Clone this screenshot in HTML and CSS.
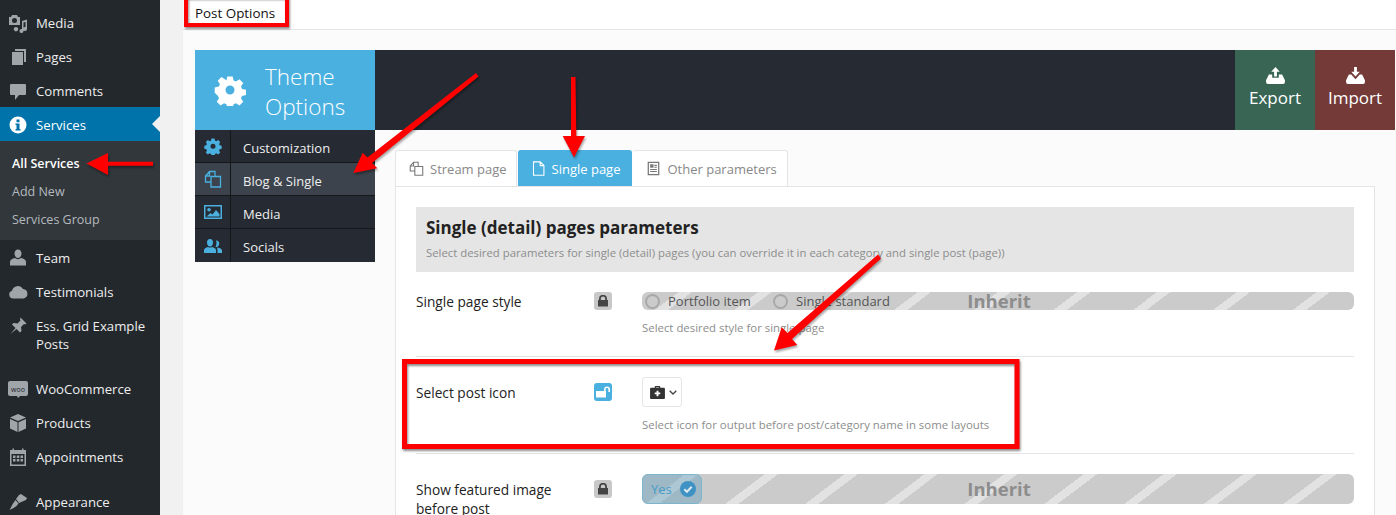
FILE: index.html
```html
<!DOCTYPE html>
<html lang="en">
<head>
  <meta charset="UTF-8">
  <title>Post Options</title>
  <link rel="stylesheet" href="styles.css">
</head>
<body>
  <aside class="sidebar">
    <ul class="wp-menu">
      <li class="wp-item"><svg class="wp-icon" viewBox="0 0 20 20"><path d="M1 4h2l1-2h5l1 2h2v8H1zM6.500 5a2.500 2.500 0 1 0 0 5a2.500 2.500 0 0 0 0-5zM14 8l5-1.500v9.500a2 2 0 1 1-1.500-2V9l-2 .6V18a2 2 0 1 1-1.500-2zM8 14a2.200 2.200 0 1 1-.01 0z"/></svg>Media</li>
      <li class="wp-item"><svg class="wp-icon" viewBox="0 0 20 20"><path d="M7 2h11v13h-2V4H7zM4 5h11v13H4z" fill-rule="evenodd"/></svg>Pages</li>
      <li class="wp-item"><svg class="wp-icon" viewBox="0 0 20 20"><path d="M3 3h14a1 1 0 0 1 1 1v9a1 1 0 0 1-1 1h-6l-4 5v-5H3a1 1 0 0 1-1-1V4a1 1 0 0 1 1-1z"/></svg>Comments</li>
      <li class="wp-item wp-current"><svg class="wp-icon" viewBox="0 0 20 20"><path fill-rule="evenodd" d="M10 1.500a8.500 8.500 0 1 1 0 17a8.500 8.500 0 0 1 0-17zM8.500 4.500v2.700h3V4.500zM7.500 8.600v1.500h1v4h-1v1.500h5v-1.500h-1V8.600z"/></svg>Services</li>
      <li class="wp-sub">
        <a class="wp-sub-link wp-sub-on">All Services</a>
        <a class="wp-sub-link">Add New</a>
        <a class="wp-sub-link">Services Group</a>
      </li>
      <li class="wp-item"><svg class="wp-icon" viewBox="0 0 20 20"><path d="M10 1.500c2.200 0 3.500 1.800 3.500 4s-1.300 4.500-3.500 4.500s-3.500-2.300-3.500-4.500s1.300-4 3.500-4zM7 10c1.500 1.500 4.500 1.500 6 0c3 .5 5 2 5 4v3.500H2V14c0-2 2-3.500 5-4z"/></svg>Team</li>
      <li class="wp-item"><svg class="wp-icon" viewBox="0 0 20 20"><path d="M5 16a4 4 0 0 1-1-7.800A6 6 0 0 1 15 6.500a4.800 4.800 0 0 1 .5 9.500z" transform="translate(0 .5)"/></svg>Testimonials</li>
      <li class="wp-item"><svg class="wp-icon" viewBox="0 0 20 20"><path d="M12.500 1.500l6 6l-1.500 1l-1-.5l-3 3l.5 4l-1.500 1.500l-3.500-3.500l-6 5l5-6l-3.500-3.500l1.500-1.500l4 .5l3-3l-.5-1z"/></svg>Ess. Grid Example Posts</li>
      <li class="wp-item wp-gap"><svg class="wp-icon" viewBox="0 0 20 20"><rect x="0" y="2" width="20" height="15" rx="2"/><path d="M9 17h3l-2 2z"/><text class="woo-text" x="10" y="12.500">woo</text></svg>WooCommerce</li>
      <li class="wp-item"><svg class="wp-icon" viewBox="0 0 20 20"><path d="M10 1l8 3.500l-8 3.500l-8-3.500zM2 6l7.500 3.300V19L2 15.500zM18 6v9.500L10.500 19V9.300z"/></svg>Products</li>
      <li class="wp-item"><svg class="wp-icon" viewBox="0 0 20 20"><path fill-rule="evenodd" d="M2 3h2.500V1.500h1.500V3h8V1.500h1.500V3H18v16H2zM3.500 7v10.500h13V7zM5 8.500h2.500V11H5zM8.800 8.500h2.500V11H8.800zM12.500 8.500H15V11h-2.500zM5 12h2.500v2.500H5zM8.800 12h2.500v2.500H8.800zM12.500 12H15v2.500h-2.500z"/></svg>Appointments</li>
      <li class="wp-item wp-gap"><svg class="wp-icon" viewBox="0 0 20 20"><path d="M13 2l6 4l-1 2l-7 3l-3-4l3-4zM7.500 8l3 3.500l-2 2.500c-1.500 1.500-5 3-7 4c1-2 2.500-4.500 3.500-6.500z"/></svg>Appearance</li>
    </ul>
  </aside>

  <main class="main">
    <div class="page-title">Post Options</div>
    <div class="options">
      <header class="opt-head">
        <div class="opt-logo">
          <svg class="opt-gear" viewBox="0 0 32 32"><path fill-rule="evenodd" d="M13 1h6l1 4.500l2.600 1.100l3.900-2.500l4.200 4.200l-2.500 3.900l1.100 2.600l4.700 1v5.800l-4.700 1l-1.100 2.600l2.500 3.900l-4.200 4.200l-3.900-2.500l-2.600 1.100l-1 4.500h-6l-1-4.500l-2.600-1.100l-3.900 2.500l-4.200-4.200l2.500-3.900l-1.100-2.600L-1 19v-5.800l4.700-1l1.100-2.600l-2.500-3.900l4.200-4.200l3.900 2.500L12 5.500zM16 11a5 5 0 1 0 0 10a5 5 0 0 0 0-10z" transform="translate(1.600 1.600) scale(.9)"/></svg>
          <span class="opt-title">Theme Options</span>
        </div>
        <div class="opt-actions">
          <a class="opt-btn opt-export"><svg class="opt-btn-icon" viewBox="0 0 20 18"><path d="M10 0l4.500 5H11.500v5h-3V5H5.500zM3 8h3.500v3.500h7V8H17l3 6v2a2 2 0 0 1-2 2H2a2 2 0 0 1-2-2v-2z"/></svg>Export</a>
          <a class="opt-btn opt-import"><svg class="opt-btn-icon" viewBox="0 0 20 18"><path d="M8.500 0h3v5h3L10 10L5.500 5h3zM3 8h2.500l4.500 5l4.500-5H17l3 6v2a2 2 0 0 1-2 2H2a2 2 0 0 1-2-2v-2z"/></svg>Import</a>
        </div>
      </header>

      <div class="opt-body">
        <nav class="opt-nav">
          <a class="nav-row"><span class="nav-icon"><svg viewBox="0 0 16 16"><path fill-rule="evenodd" d="M6.500 1h3l.4 2l1.400.6l1.800-1.100l2 2l-1.100 1.800l.6 1.400l2 .4v3l-2 .4l-.6 1.400l1.100 1.800l-2 2l-1.800-1.100l-1.400.6l-.4 2h-3l-.4-2l-1.400-.6l-1.800 1.100l-2-2l1.100-1.800l-.6-1.400l-2-.4v-3l2-.4l.6-1.400l-1.100-1.800l2-2l1.800 1.100l1.400-.6zM8 6a2.500 2.500 0 1 0 0 5a2.500 2.500 0 0 0 0-5z" transform="translate(.8 .5) scale(.9)"/></svg></span><span class="nav-text">Customization</span></a>
          <a class="nav-row nav-on"><span class="nav-icon"><svg viewBox="0 0 18 18"><path class="line" d="M7 12H1.500V6l4-4.500H11V6M7 6.500h9.500V17H7zM1.500 6h4V1.500"/></svg></span><span class="nav-text">Blog &amp; Single</span></a>
          <a class="nav-row"><span class="nav-icon"><svg viewBox="0 0 18 18"><path fill-rule="evenodd" d="M0 2h18v14H0zM1.500 3.500v11h15v-11zM5 5a1.800 1.800 0 1 1 0 3.600A1.800 1.800 0 0 1 5 5zM2.500 13.500l4-3.500l2 1.500l3.500-4.500l3.500 4v2.500z"/></svg></span><span class="nav-text">Media</span></a>
          <a class="nav-row"><span class="nav-icon"><svg viewBox="0 0 18 18"><path d="M6 2c2 0 3 1.600 3 3.500S8 9.500 6 9.500S3 7.400 3 5.500S4 2 6 2zM0 16v-3c0-1.500 2-2.500 4-3c1 .8 3 .8 4 0c2 .5 4 1.500 4 3v3zM12.500 3.500c1.800 0 2.700 1.400 2.700 3s-1 3.500-2.700 3.500c-.4 0-.8-.1-1-.3c.6-1 1-2.400 1-3.700c0-1-.2-1.800-.6-2.400c.2-.1.400-.1.600-.1zM13 10.500c2 .3 5 1.200 5 2.700V16h-4.500v-3.500c0-.7-.3-1.400-.5-2z"/></svg></span><span class="nav-text">Socials</span></a>
        </nav>

        <section class="opt-content">
          <div class="tabs">
            <a class="tab"><svg class="tab-icon" viewBox="0 0 18 18"><path class="line" d="M7 12H1.500V6l4-4.500H11V6M7 6.500h9.500V17H7zM1.500 6h4V1.500"/></svg>Stream page</a>
            <a class="tab tab-on"><svg class="tab-icon" viewBox="0 0 18 18"><path class="line" d="M3 1h8l4.500 4.500V17H3zM11 1v4.500h4.500"/></svg>Single page</a>
            <a class="tab"><svg class="tab-icon" viewBox="0 0 18 18"><path fill-rule="evenodd" d="M2 1h14v16H2zM3.500 2.500v13h11v-13zM5 4h4v4H5zM10 4.500h3V6h-3zM10 7h3v1.200h-3zM5 9.500h8v1.200H5zM5 12h8v1.200H5z"/></svg>Other parameters</a>
          </div>
          <div class="panel">
            <div class="panel-head">
              <h2>Single (detail) pages parameters</h2>
              <p>Select desired parameters for single (detail) pages (you can override it in each category and single post (page))</p>
            </div>

            <div class="row">
              <div class="row-label">Single page style</div>
              <div class="row-lock"><span class="lock"><svg viewBox="0 0 12 12"><path fill-rule="evenodd" d="M2 5V3.800a4 4 0 0 1 8 0V5h1v6.500H1V5zM3.800 5h4.400V3.800a2.200 2.200 0 0 0-4.400 0z"/></svg></span></div>
              <div class="row-field">
                <div class="stripes stripes-sm">
                  <div class="radios">
                    <span class="radio"><i class="dot"></i>Portfolio item</span>
                    <span class="radio"><i class="dot"></i>Single standard</span>
                  </div>
                  <b class="inherit">Inherit</b>
                </div>
                <p class="desc">Select desired style for single page</p>
              </div>
            </div>

            <div class="row row-tall">
              <div class="row-label">Select post icon</div>
              <div class="row-lock"><span class="lock lock-open"><svg viewBox="0 0 14 12"><path fill-rule="evenodd" d="M0 5h8V3.500a3 3 0 0 1 6 0V6h-1.600V3.500a1.400 1.400 0 0 0-2.800 0V5H10v6.500H0z"/></svg></span></div>
              <div class="row-field">
                <div class="icon-select">
                  <svg class="case" viewBox="0 0 16 14"><path fill-rule="evenodd" d="M5 2V1a1 1 0 0 1 1-1h4a1 1 0 0 1 1 1v1h4a1 1 0 0 1 1 1v10a1 1 0 0 1-1 1H1a1 1 0 0 1-1-1V3a1 1 0 0 1 1-1zM6.300 1.300V2h3.400v-.7zM7 5v2H5v2h2v2h2V9h2V7H9V5z"/></svg>
                  <svg class="chev" viewBox="0 0 8 5"><path d="M.7.700L4 4l3.300-3.300"/></svg>
                </div>
                <p class="desc">Select icon for output before post/category name in some layouts</p>
              </div>
            </div>

            <div class="row row-tall">
              <div class="row-label">Show featured image before post</div>
              <div class="row-lock"><span class="lock"><svg viewBox="0 0 12 12"><path fill-rule="evenodd" d="M2 5V3.800a4 4 0 0 1 8 0V5h1v6.500H1V5zM3.800 5h4.400V3.800a2.200 2.200 0 0 0-4.400 0z"/></svg></span></div>
              <div class="row-field">
                <div class="stripes stripes-lg">
                  <div class="radios">
                    <span class="yes">Yes<svg class="yes-check" viewBox="0 0 16 16"><circle cx="8" cy="8" r="8"/><path d="M4.300 8.300l2.600 2.500l4.800-5"/></svg></span>
                  </div>
                  <b class="inherit">Inherit</b>
                </div>
              </div>
            </div>
          </div>
        </section>
      </div>
    </div>
  </main>

  <!-- red marks drawn over the screenshot -->
  <svg class="marks" viewBox="0 0 1396 515">
    <rect class="box" x="186" y="-4" width="101" height="29"/>
    <rect class="box box-big" x="404.500" y="361.500" width="612.500" height="85"/>
    <path class="arrow" d="M153 161.700h-45v-8.700l-21.500 10.500l21.500 11.500v-9.300h45z"/>
    <path class="arrow" d="M476 73L478.500 76.500L372 163L377.300 168.300L353.300 173L362.700 152.700L367.500 157.500z"/>
    <path class="arrow" d="M571 77h4.500l.8 59H585L574 157.500L562.700 136H571z"/>
    <path class="arrow" d="M878 254.500L881 258.500L792 339L797.300 345L774 350.500L781.700 327.300L787.500 333z"/>
  </svg>
</body>
</html>
```

FILE: styles.css
```css
* {
  box-sizing: border-box;
}
html, body {
  height: 515px;
  overflow: hidden;
}
body {
  margin: 0;
  display: flex;
  background: #f1f1f1;
  font-family: "Open Sans", sans-serif;
  font-size: 13px;
  color: #333;
}
p, h2, ul {
  margin: 0;
  padding: 0;
}

/* wordpress sidebar */
.sidebar {
  width: 160px;
  flex: none;
  background: #23282d;
  padding-top: 5px;
}
.wp-menu {
  list-style: none;
}
.wp-item {
  display: flex;
  align-items: flex-start;
  position: relative;
  padding: 9px 10px 7px 36px;
  line-height: 18px;
  color: #eee;
  font-size: 13.2px;
}
.wp-icon {
  position: absolute;
  left: 8px;
  top: 8px;
  width: 20px;
  height: 20px;
  fill: #a0a5aa;
}
.wp-gap {
  margin-top: 11px;
}
.woo-text {
  font-family: "Open Sans", sans-serif;
  font-size: 7px;
  text-anchor: middle;
  fill: #23282d;
}
.wp-current {
  background: #0073aa;
  color: #fff;
}
.wp-current .wp-icon {
  fill: #fff;
}
.wp-current::after {
  content: "";
  position: absolute;
  right: 0;
  top: 9px;
  border: 8px solid transparent;
  border-right-color: #f1f1f1;
  border-left: 0;
}
.wp-sub {
  display: block;
  background: #32373c;
  padding: 9px 0 6px;
}
.wp-sub-link {
  display: block;
  height: 28px;
  padding-left: 12px;
  line-height: 28px;
  color: #b4b9be;
  font-size: 12.5px;
}
.wp-sub-on {
  color: #fff;
  font-weight: 600;
}

/* page area */
.main {
  flex: 1;
  margin-left: 23px;
  background: #fbfbfb;
  min-width: 0;
}
.page-title {
  height: 30px;
  padding: 4px 0 0 12px;
  background: #fff;
  border-bottom: 1px solid #e5e5e5;
  line-height: 18px;
  color: #111;
  font-size: 13.400px;
}
.options {
  padding: 20px 1px 0 12px;
}
.opt-head {
  display: flex;
  justify-content: space-between;
  height: 80px;
  background: #262b33;
}
.opt-logo {
  width: 180px;
  display: flex;
  align-items: center;
  background: #4ab0e0;
  padding-left: 19px;
  color: #fff;
}
.opt-gear {
  width: 32px;
  height: 32px;
  fill: #fff;
  flex: none;
  margin-right: 19px;
}
.opt-title {
  padding-top: 4px;
  font-size: 22.500px;
  line-height: 30px;
  font-weight: 300;
}
.opt-actions {
  display: flex;
}
.opt-btn {
  width: 80px;
  display: flex;
  flex-direction: column;
  align-items: center;
  padding-top: 17px;
  color: #fff;
  font-size: 17px;
  line-height: 24px;
}
.opt-btn-icon {
  width: 19px;
  height: 17px;
  fill: #fff;
  margin-bottom: 2px;
}
.opt-export {
  background: #386554;
}
.opt-import {
  background: #733a38;
}
.opt-body {
  display: flex;
  align-items: flex-start;
}

/* left options menu */
.opt-nav {
  width: 180px;
  flex: none;
  background: #262b33;
}
.nav-row {
  display: flex;
  align-items: center;
  height: 33px;
  color: #eee;
  border-bottom: 1px solid #15181b;
}
.nav-row:last-child {
  border-bottom: 0;
}
.nav-text {
  margin-top: 3px;
}
.nav-on {
  background: #3c434c;
}
.nav-icon {
  width: 36px;
  height: 100%;
  flex: none;
  display: flex;
  align-items: center;
  justify-content: center;
  border-right: 1px solid #15181b;
  margin-right: 12px;
}
.nav-icon svg {
  width: 18px;
  height: 18px;
  fill: #4ab0e0;
}
.line {
  fill: none;
  stroke: currentColor;
  stroke-width: 1.300;
}
.nav-icon .line {
  color: #4ab0e0;
}

/* tabs and panel */
.opt-content {
  flex: 1;
  min-width: 0;
  padding: 20px 20px 0;
}
.tabs {
  display: flex;
  height: 36px;
}
.tab {
  display: flex;
  align-items: center;
  padding: 0 10px 0 13px;
  background: #fff;
  border: 1px solid #e5e5e5;
  border-bottom: 0;
  border-left: 0;
  border-radius: 3px 3px 0 0;
  color: #888;
}
.tab:first-child {
  border-left: 1px solid #e5e5e5;
  padding-right: 9px;
}
.tab-icon {
  width: 15px;
  height: 15px;
  margin-right: 6px;
  fill: #777;
  color: #777;
}
.tab-on {
  background: #4ab0e0;
  border-color: #4ab0e0;
  color: #fff;
  margin-left: 1px;
  padding-right: 11px;
}
.tab-on .tab-icon {
  color: #fff;
}
.tab-on + .tab {
  margin-left: 1px;
}
.panel {
  background: #fff;
  border: 1px solid #e5e5e5;
  padding: 20px 20px 0;
}
.panel-head {
  height: 65px;
  background: #e5e5e5;
  padding: 9px 10px 0;
}
.panel-head h2 {
  font-size: 17px;
  line-height: 24px;
  font-weight: 700;
  color: #222;
}
.panel-head p {
  margin-top: 4px;
  font-size: 11.350px;
  line-height: 18px;
  color: #8d8d8d;
}
.row {
  display: flex;
  padding: 20px 0 18px;
  border-bottom: 1px solid #e5e5e5;
}
.row-label {
  width: 178px;
  flex: none;
  padding-right: 40px;
  line-height: 19px;
  color: #222;
  font-weight: 500;
  font-size: 13.700px;
}
.row-tall .row-label {
  padding-top: 6px;
}
.row-tall .lock {
  margin-top: 6px;
}
.row-lock {
  width: 48px;
  flex: none;
}
.lock {
  width: 18px;
  height: 18px;
  display: flex;
  align-items: center;
  justify-content: center;
  background: #c8c8c8;
  border-radius: 3px;
}
.lock svg {
  width: 12px;
  height: 12px;
  fill: #444;
}
.lock-open {
  background: #4ab0e0;
}
.lock-open svg {
  width: 14px;
  fill: #fff;
}
.row-field {
  flex: 1;
  min-width: 0;
}
.stripes {
  display: grid;
  align-items: center;
  border-radius: 6px;
  background: repeating-linear-gradient(143deg, #cbcbcb 0, #cbcbcb 22px, #e2e2e2 22px, #e2e2e2 30px, #cbcbcb 30px, #cbcbcb 48px);
}
.stripes > * {
  grid-area: 1 / 1;
}
.stripes-sm {
  height: 18px;
}
.stripes-lg {
  height: 30px;
  background: repeating-linear-gradient(143deg, #cbcbcb 0, #cbcbcb 26px, #e2e2e2 26px, #e2e2e2 34px, #cbcbcb 34px, #cbcbcb 48px);
}
.inherit {
  justify-self: center;
  padding-left: 2px;
  font-size: 18.500px;
  line-height: 18px;
  color: #8d8d8d;
}
.radios {
  display: flex;
  align-items: center;
}
.radio {
  display: flex;
  align-items: center;
  width: 128px;
  padding-left: 3px;
  color: #555;
  line-height: 18px;
}
.dot {
  width: 15px;
  height: 15px;
  margin-right: 8px;
  border: 2px solid #a8a8a8;
  border-radius: 50%;
}
.yes {
  display: flex;
  align-items: center;
  justify-content: space-between;
  width: 60px;
  height: 30px;
  padding: 0 5px 0 8px;
  background: rgba(74, 150, 190, .35);
  border: 1px solid #7cb6cc;
  border-radius: 6px;
  color: #4a9cc8;
  font-size: 13px;
}
.yes-check {
  width: 16px;
  height: 16px;
  fill: #3f93c4;
}
.yes-check path {
  fill: none;
  stroke: #dfe8ec;
  stroke-width: 2;
}
.desc {
  margin-top: 8px;
  line-height: 20px;
  font-size: 11.400px;
  color: #8d8d8d;
}
.icon-select {
  width: 40px;
  height: 30px;
  display: flex;
  align-items: center;
  gap: 4px;
  padding-left: 7px;
  border: 1px solid #e5e5e5;
  border-radius: 3px;
}
.case {
  width: 15px;
  height: 13px;
  fill: #333;
}
.chev {
  width: 8px;
  height: 5px;
  fill: none;
  stroke: #444;
  stroke-width: 1.300;
}

/* red annotations */
.marks {
  position: absolute;
  left: 0;
  top: 0;
  width: 1396px;
  height: 515px;
  overflow: hidden;
  pointer-events: none;
}
.box {
  fill: none;
  stroke: #f00;
  stroke-width: 4;
  filter: drop-shadow(1px 2px 1px rgba(0, 0, 0, .45));
}
.box-big {
  stroke-width: 5;
}
.arrow {
  fill: #f00;
  filter: drop-shadow(1px 2px 1px rgba(0, 0, 0, .35));
}
```
